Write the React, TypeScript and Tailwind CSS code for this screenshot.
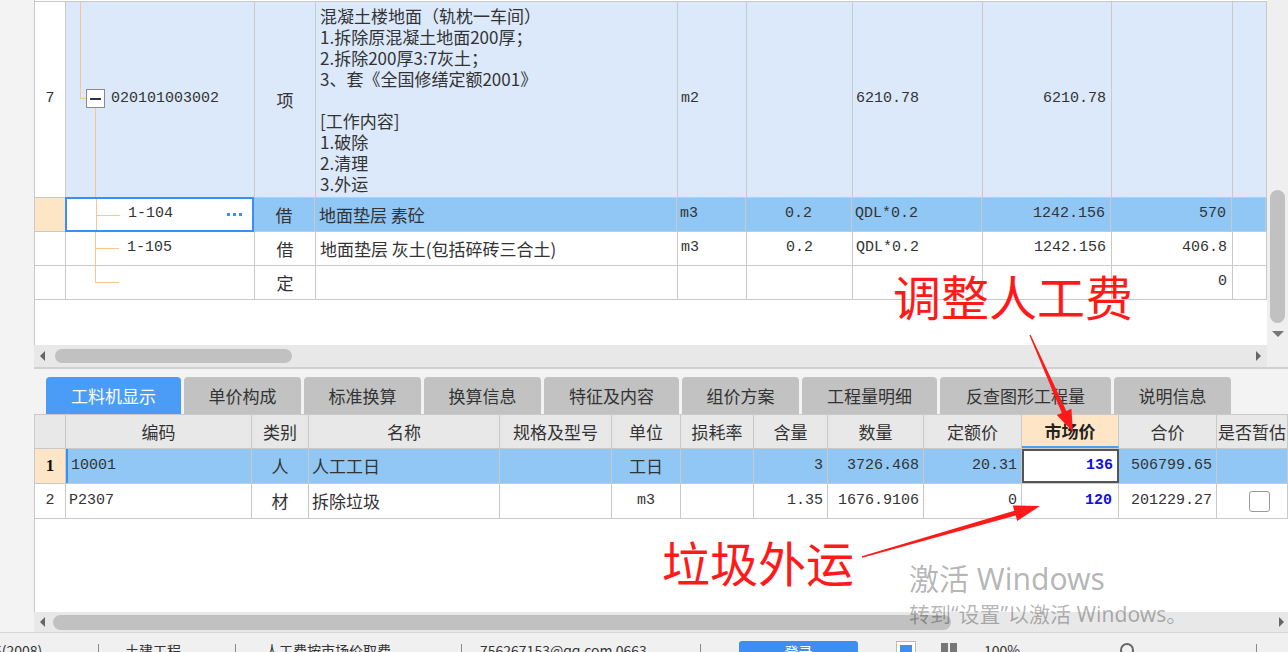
import React from 'react';

const cjk = "font-['Noto_Sans_CJK_SC','Noto_Sans',sans-serif]";
const mono = "font-['Liberation_Mono','Noto_Sans_CJK_SC',monospace]";

const TW = ['w-[31px]', 'w-[189px]', 'w-[61px]', 'w-[362px]', 'w-[69px]', 'w-[106px]', 'w-[130px]', 'w-[129px]', 'w-[121px]', 'w-[34px]'];
const BW = ['w-[31px]', 'w-[186px]', 'w-[57px]', 'w-[191px]', 'w-[112px]', 'w-[69px]', 'w-[73px]', 'w-[74px]', 'w-[96px]', 'w-[98px]', 'w-[97px]', 'w-[98px]', 'w-[71px]'];

const C: React.FC<{ w: string; className?: string; children?: React.ReactNode }> = ({ w, className = '', children }) => (
  <div className={`${w} h-full shrink-0 border-r border-[#c9c9c9] flex items-center overflow-hidden ${className}`}>{children}</div>
);

const Tree: React.FC<{ kind: 'mid' | 'last' }> = ({ kind }) => (
  <>
    <div className={`absolute left-[29px] top-0 w-px bg-[#fcc68a] ${kind === 'last' ? 'h-[17px]' : 'h-full'}`} />
    <div className="absolute left-[29px] top-[16px] w-[24px] h-px bg-[#fcc68a]" />
  </>
);

const TopTable = () => (
  <div className="w-[1233px] h-[345px] bg-white border-l border-[#c9c9c9] pt-px">
    <div className="border-t border-[#c9c9c9]">
      {/* row 7 */}
      <div className="flex h-[196px] border-b border-[#c9c9c9] bg-[#dce9fb]">
        <C w={TW[0]} className="justify-center bg-white"><span className={`${mono} text-[15px] text-[#333]`}>7</span></C>
        <C w={TW[1]} className="relative">
          <div className="absolute left-[14px] top-0 w-px h-[97px] bg-[#fcc68a]" />
          <div className="absolute left-[14px] top-[96px] w-[6px] h-px bg-[#fcc68a]" />
          <div className="absolute left-[20px] top-[87px] w-[19px] h-[19px] border border-[#8a8a8a] bg-white flex items-center justify-center">
            <div className="w-[11px] h-[2px] bg-[#333]" />
          </div>
          <div className="absolute left-[29px] top-[106px] w-px h-[90px] bg-[#fcc68a]" />
          <span className={`absolute left-[45px] top-[86px] ${mono} text-[15px] text-[#333]`}>020101003002</span>
        </C>
        <C w={TW[2]} className={`justify-center ${cjk} text-[17px] text-[#333]`}>项</C>
        <C w={TW[3]} className={`px-[4px] ${cjk} text-[17px] leading-[21px] text-[#333] whitespace-pre-line`}>
          {'混凝土楼地面（轨枕一车间）\n1.拆除原混凝土地面200厚；\n2.拆除200厚3:7灰土；\n3、套《全国修缮定额2001》\n\n[工作内容]\n1.破除\n2.清理\n3.外运'}
        </C>
        <C w={TW[4]} className={`px-[3px] ${mono} text-[15px] text-[#333]`}>m2</C>
        <C w={TW[5]} />
        <C w={TW[6]} className={`px-[3px] ${mono} text-[15px] text-[#333]`}>6210.78</C>
        <C w={TW[7]} className={`justify-end px-[5px] ${mono} text-[15px] text-[#333]`}>6210.78</C>
        <C w={TW[8]} />
        <C w={TW[9]} />
      </div>
      {/* 1-104 */}
      <div className="flex h-[34px] border-b border-[#c9c9c9] bg-[#91c7f5]">
        <C w={TW[0]} className="bg-[#fde6c6]" />
        <C w={TW[1]} className="relative bg-white border-2! border-[#3b8ef3]! -ml-px -my-px h-[35px]!">
          <Tree kind="mid" />
          <span className={`absolute left-[61px] top-[4px] ${mono} text-[15px] text-[#333]`}>1-104</span>
          <div className="absolute right-[10px] top-[14px] flex gap-[3px]">
            <div className="w-[3px] h-[3px] bg-[#3b8ef3]" />
            <div className="w-[3px] h-[3px] bg-[#3b8ef3]" />
            <div className="w-[3px] h-[3px] bg-[#3b8ef3]" />
          </div>
        </C>
        <C w={TW[2]} className={`justify-center ${cjk} text-[17px] text-[#333]`}>借</C>
        <C w={TW[3]} className={`px-[4px] ${cjk} text-[17px] text-[#333]`}>地面垫层 素砼</C>
        <C w={TW[4]} className={`px-[3px] ${mono} text-[15px] text-[#333]`}>m3</C>
        <C w={TW[5]} className={`justify-center ${mono} text-[15px] text-[#333]`}>0.2</C>
        <C w={TW[6]} className={`px-[3px] ${mono} text-[15px] text-[#333]`}>QDL*0.2</C>
        <C w={TW[7]} className={`justify-end px-[5px] ${mono} text-[15px] text-[#333]`}>1242.156</C>
        <C w={TW[8]} className={`justify-end px-[5px] ${mono} text-[15px] text-[#333]`}>570</C>
        <C w={TW[9]} className="bg-[#91c7f5]" />
      </div>
      {/* 1-105 */}
      <div className="flex h-[34px] border-b border-[#c9c9c9] bg-white">
        <C w={TW[0]} />
        <C w={TW[1]} className="relative">
          <Tree kind="mid" />
          <span className={`absolute left-[61px] top-[5px] ${mono} text-[15px] text-[#333]`}>1-105</span>
        </C>
        <C w={TW[2]} className={`justify-center ${cjk} text-[17px] text-[#333]`}>借</C>
        <C w={TW[3]} className={`px-[4px] ${cjk} text-[17px] text-[#333]`}>地面垫层 灰土(包括碎砖三合土)</C>
        <C w={TW[4]} className={`px-[3px] ${mono} text-[15px] text-[#333]`}>m3</C>
        <C w={TW[5]} className={`justify-center ${mono} text-[15px] text-[#333]`}>0.2</C>
        <C w={TW[6]} className={`px-[3px] ${mono} text-[15px] text-[#333]`}>QDL*0.2</C>
        <C w={TW[7]} className={`justify-end px-[5px] ${mono} text-[15px] text-[#333]`}>1242.156</C>
        <C w={TW[8]} className={`justify-end px-[5px] ${mono} text-[15px] text-[#333]`}>406.8</C>
        <C w={TW[9]} />
      </div>
      {/* 定 */}
      <div className="flex h-[34px] border-b border-[#c9c9c9] bg-white">
        <C w={TW[0]} />
        <C w={TW[1]} className="relative"><Tree kind="last" /></C>
        <C w={TW[2]} className={`justify-center ${cjk} text-[17px] text-[#333]`}>定</C>
        <C w={TW[3]} />
        <C w={TW[4]} />
        <C w={TW[5]} />
        <C w={TW[6]} />
        <C w={TW[7]} />
        <C w={TW[8]} className={`justify-end px-[5px] ${mono} text-[15px] text-[#333]`}>0</C>
        <C w={TW[9]} />
      </div>
    </div>
  </div>
);

const tabs: [string, string][] = [
  ['工料机显示', 'w-[135px]'],
  ['单价构成', 'w-[117px]'],
  ['标准换算', 'w-[117px]'],
  ['换算信息', 'w-[117px]'],
  ['特征及内容', 'w-[135px]'],
  ['组价方案', 'w-[117px]'],
  ['工程量明细', 'w-[135px]'],
  ['反查图形工程量', 'w-[171px]'],
  ['说明信息', 'w-[117px]'],
];

const heads = ['', '编码', '类别', '名称', '规格及型号', '单位', '损耗率', '含量', '数量', '定额价', '市场价', '合价', '是否暂估'];

const BottomTable = () => (
  <div className="flex-1 bg-white border-l border-[#c9c9c9]">
    <div className="flex h-[35px] border-y border-[#c9c9c9] bg-[#e8e8e8]">
      {heads.map((h, i) => (
        <C
          key={i}
          w={BW[i]}
          className={`justify-center whitespace-nowrap ${cjk} text-[17px] ${i === 10 ? 'bg-[#fde5c6] font-bold text-[#222] border-b-2 border-b-[#4a9ef8]!' : 'text-[#333]'}`}
        >
          {h}
        </C>
      ))}
    </div>
    <div className="flex h-[35px] border-b border-[#c9c9c9] bg-[#91c7f5]">
      <C w={BW[0]} className="justify-center bg-[#fde6c8]"><span className="font-['Liberation_Serif',serif] font-bold text-[17px] text-[#111]">1</span></C>
      <C w={BW[1]} className={`px-[3px] border-l-2 border-l-[#3b8ef3]! ${mono} text-[15px] text-[#333]`}>10001</C>
      <C w={BW[2]} className={`justify-center ${cjk} text-[17px] text-[#333]`}>人</C>
      <C w={BW[3]} className={`px-[3px] ${cjk} text-[17px] text-[#333]`}>人工工日</C>
      <C w={BW[4]} />
      <C w={BW[5]} className={`justify-center ${cjk} text-[17px] text-[#333]`}>工日</C>
      <C w={BW[6]} />
      <C w={BW[7]} className={`justify-end px-[4px] ${mono} text-[15px] text-[#333]`}>3</C>
      <C w={BW[8]} className={`justify-end px-[4px] ${mono} text-[15px] text-[#333]`}>3726.468</C>
      <C w={BW[9]} className={`justify-end px-[4px] ${mono} text-[15px] text-[#333]`}>20.31</C>
      <C w={BW[10]} className={`justify-end px-[4px] bg-white border-2! border-[#555]! ${mono} text-[15px] font-bold text-[#1010e0]`}>136</C>
      <C w={BW[11]} className={`justify-end px-[4px] ${mono} text-[15px] text-[#333]`}>506799.65</C>
      <C w={BW[12]} />
    </div>
    <div className="flex h-[35px] border-b border-[#c9c9c9] bg-white">
      <C w={BW[0]} className={`justify-center ${mono} text-[15px] text-[#333]`}>2</C>
      <C w={BW[1]} className={`px-[3px] ${mono} text-[15px] text-[#333]`}>P2307</C>
      <C w={BW[2]} className={`justify-center ${cjk} text-[17px] text-[#333]`}>材</C>
      <C w={BW[3]} className={`px-[3px] ${cjk} text-[17px] text-[#333]`}>拆除垃圾</C>
      <C w={BW[4]} />
      <C w={BW[5]} className={`justify-center ${mono} text-[15px] text-[#333]`}>m3</C>
      <C w={BW[6]} />
      <C w={BW[7]} className={`justify-end px-[4px] ${mono} text-[15px] text-[#333]`}>1.35</C>
      <C w={BW[8]} className={`justify-end px-[4px] ${mono} text-[15px] text-[#333]`}>1676.9106</C>
      <C w={BW[9]} className={`justify-end px-[4px] ${mono} text-[15px] text-[#333]`}>0</C>
      <C w={BW[10]} className={`justify-end px-[6px] ${mono} text-[15px] font-bold text-[#1010e0]`}>120</C>
      <C w={BW[11]} className={`justify-end px-[4px] ${mono} text-[15px] text-[#333]`}>201229.27</C>
      <C w={BW[12]} className="pl-[32px]">
        <div className="w-[21px] h-[21px] rounded-[3px] border border-[#999] bg-white" />
      </C>
    </div>
  </div>
);

const Sep = () => <div className="w-px h-[14px] bg-[#888]" />;

export default function App() {
  return (
    <div className={`relative w-[1288px] h-[652px] overflow-hidden bg-[#f3f3f3] ${cjk}`}>
      <div className="flex h-[632px]">
        <div className="w-[34px] shrink-0 bg-[#f3f3f3]" />
        <div className="flex-1 flex flex-col">
          {/* top panel */}
          <div className="flex h-[367px]">
            <div className="flex flex-col">
              <TopTable />
              <div className="h-[22px] bg-[#e8e8e8] flex items-center relative">
                <div className="ml-[6px] w-0 h-0 border-y-[5px] border-y-transparent border-r-[5px] border-r-[#666]" />
                <div className="ml-[10px] w-[237px] h-[14px] rounded-full bg-[#c1c1c1]" />
                <div className="absolute right-[6px] top-[6px] w-0 h-0 border-y-[5px] border-y-transparent border-l-[5px] border-l-[#666]" />
              </div>
            </div>
            <div className="w-[21px] flex flex-col bg-[#efefef]">
              <div className="h-[190px]" />
              <div className="mx-auto w-[15px] h-[133px] rounded-full bg-[#c1c1c1]" />
              <div className="mt-[8px] mx-auto w-0 h-0 border-x-[6px] border-x-transparent border-t-[6px] border-t-[#777]" />
            </div>
          </div>
          <div className="h-[2px] bg-[#d0d0d0]" />
          {/* tabs */}
          <div className="h-[45px] flex items-end gap-[3px] pl-[12px]">
            {tabs.map(([t, w], i) => (
              <div
                key={t}
                className={`${w} h-[37px] rounded-t-[4px] flex items-center justify-center text-[17px] ${
                  i === 0 ? 'bg-[#4a9cf7] text-white' : 'bg-[#c2c2c2] text-[#333]'
                }`}
              >
                {t}
              </div>
            ))}
          </div>
          <BottomTable />
          <div className="h-[20px] bg-[#e8e8e8] flex items-center relative">
            <div className="ml-[6px] w-0 h-0 border-y-[5px] border-y-transparent border-r-[5px] border-r-[#666]" />
            <div className="ml-[8px] w-[898px] h-[15px] rounded-full bg-[#c1c1c1]" />
            <div className="absolute right-[4px] top-[5px] w-0 h-0 border-y-[5px] border-y-transparent border-l-[5px] border-l-[#666]" />
          </div>
        </div>
      </div>
      {/* status bar */}
      <div className="h-[20px] border-t border-[#d6d6d6] bg-[#f0f0f0] overflow-hidden">
        <div className="flex items-start pt-[7px] text-[14px] leading-[20px] text-[#333] whitespace-nowrap">
          <span className="-ml-[6px] w-[104px]">5(2008)</span>
          <div className="mt-[4px]"><Sep /></div>
          <span className="ml-[26px] w-[110px]">土建工程</span>
          <div className="mt-[4px]"><Sep /></div>
          <span className="ml-[29px] w-[196px]">人工费按市场价取费</span>
          <div className="mt-[4px]"><Sep /></div>
          <span className="ml-[18px] w-[220px]">756267153@qq.com 0663</span>
          <div className="mt-[4px]"><Sep /></div>
          <div className="ml-[38px] w-[119px] h-[24px] mt-[1px] rounded-[3px] bg-[#3d8ef0] text-white text-center">登录</div>
          <div className="ml-[38px] mt-[1px] w-[20px] h-[20px] border border-[#bbb] bg-white flex items-center justify-center">
            <div className="w-[12px] h-[12px] bg-[#3d8ef0]" />
          </div>
          <div className="ml-[25px] mt-[3px] flex gap-[2px]">
            <div className="w-[7px] h-[12px] bg-[#777]" />
            <div className="w-[7px] h-[12px] bg-[#777]" />
          </div>
          <span className="ml-[27px]">100%</span>
          <div className="ml-[100px] mt-[3px] w-[14px] h-[14px] rounded-full border-2 border-[#666]" />
          <div className="ml-[122px] mt-[4px]"><Sep /></div>
        </div>
      </div>

      {/* watermark */}
      <div className="absolute left-[909px] top-[564px] text-[30px] leading-none text-black/30 font-['Noto_Sans','Noto_Sans_CJK_SC',sans-serif] pointer-events-none">
        激活 Windows
      </div>
      <div className="absolute left-[909px] top-[604px] text-[21px] leading-none text-black/30 font-['Noto_Sans','Noto_Sans_CJK_SC',sans-serif] pointer-events-none">
        转到“设置”以激活 Windows。
      </div>

      {/* annotations */}
      <div className="absolute left-[893px] top-[271px] text-[48px] leading-none text-[#ff1a1a]">调整人工费</div>
      <div className="absolute left-[662px] top-[537px] text-[48px] leading-none text-[#ff1a1a]">垃圾外运</div>
      <svg className="absolute inset-0 pointer-events-none" width="1288" height="652">
        <polygon
          fill="#ff1a1a"
          points="1029.4,335.3 1061.8,412.9 1056.8,415.1 1073,432 1071.4,408.7 1066.4,410.9 1030.6,334.7"
        />
        <polygon
          fill="#ff1a1a"
          points="862.2,557.7 1015.7,515.6 1017.2,520.9 1040,506 1012.8,505.5 1014.3,510.8 861.8,556.3"
        />
      </svg>
    </div>
  );
}
